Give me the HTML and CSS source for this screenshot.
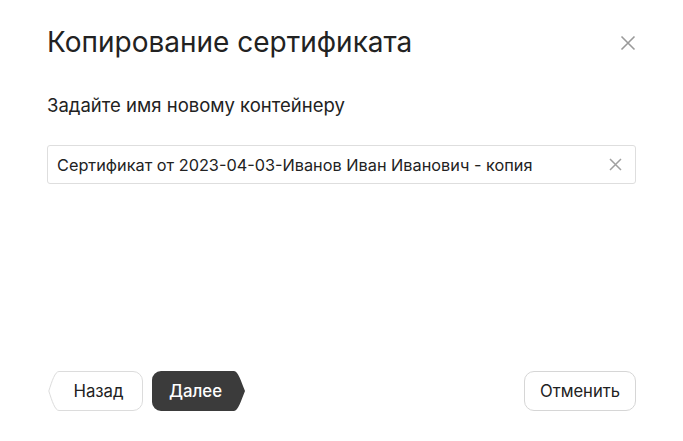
FILE: index.html
```html
<!DOCTYPE html>
<html lang="ru">
<head>
<meta charset="utf-8">
<link rel="stylesheet" href="styles.css">
</head>
<body>
<div class="dialog">
  <div class="header">
    <h1 class="title">Копирование сертификата</h1>
    <button class="close" aria-label="Закрыть">
      <svg width="16" height="16" viewBox="0 0 16 16"><path d="M1.5 1.5L14.5 14.5M14.5 1.5L1.5 14.5" stroke="#9a9a9a" stroke-width="1.6" fill="none"/></svg>
    </button>
  </div>
  <div class="label">Задайте имя новому контейнеру</div>
  <div class="field">
    <span class="field-text">Сертификат от 2023-04-03-Иванов Иван Иванович - копия</span>
    <svg class="clear" width="13" height="13" viewBox="0 0 13 13"><path d="M1 1L12 12M12 1L1 12" stroke="#a0a0a0" stroke-width="1.5" fill="none"/></svg>
  </div>
  <div class="footer">
    <div class="nav">
      <button class="btn-back">
        <svg class="shape" width="95" height="40" viewBox="0 0 95 40"><path d="M11 0.5H85a9.5 9.5 0 0 1 9.5 9.5V30a9.5 9.5 0 0 1-9.5 9.5H11C7 39.5 4 30 0.8 20C4 10 7 0.5 11 0.5Z" fill="#fff" stroke="#dcdcdc"/></svg>
        <span>Назад</span>
      </button>
      <button class="btn-next">
        <svg class="shape" width="93" height="40" viewBox="0 0 93 40"><path d="M9 0H82C86 0 89 10 93 20C89 30 86 40 82 40H9A9 9 0 0 1 0 31V9A9 9 0 0 1 9 0Z" fill="#3b3b3b"/></svg>
        <span>Далее</span>
      </button>
    </div>
    <button class="btn-cancel">Отменить</button>
  </div>
</div>
</body>
</html>
```
FILE: styles.css
```css
html, body {
  margin: 0;
  padding: 0;
  background: #fff;
}
body {
  font-family: Inter, "Noto Sans", sans-serif;
  color: #222;
}
.dialog {
  box-sizing: border-box;
  height: 441px;
  padding: 24px 47px 30px 47px;
  display: flex;
  flex-direction: column;
}
.header {
  display: flex;
  justify-content: space-between;
  align-items: flex-start;
}
.title {
  margin: 0;
  font-size: 28px;
  font-weight: 400;
  line-height: 36px;
  color: #222;
}
.close {
  border: 0;
  background: none;
  padding: 0;
  margin-top: 11px;
  width: 16px;
  height: 16px;
  display: flex;
}
.label {
  margin-top: 33px;
  font-size: 18.5px;
  line-height: 24px;
  color: #222;
}
.field {
  margin-top: 28px;
  height: 39px;
  box-sizing: border-box;
  border: 1px solid #dedede;
  border-radius: 3px;
  display: flex;
  align-items: center;
  justify-content: space-between;
  padding: 0 13px 0 9px;
}
.field-text {
  font-size: 16.3px;
  color: #222;
}
.footer {
  margin-top: auto;
  display: flex;
  justify-content: space-between;
  align-items: center;
}
.nav {
  display: flex;
  gap: 9px;
  margin-left: 1px;
}
.btn-back, .btn-next {
  position: relative;
  border: 0;
  background: none;
  padding: 0;
  height: 40px;
  font-family: inherit;
  font-size: 16.8px;
  display: flex;
  align-items: center;
  justify-content: center;
}
.btn-back { width: 95px; color: #222; padding-left: 6px; }
.btn-next { width: 93px; color: #fff; font-weight: 500; padding-right: 6px; }
.btn-back span, .btn-next span { position: relative; }
.shape {
  position: absolute;
  left: 0;
  top: 0;
}
.btn-cancel {
  height: 40px;
  width: 112px;
  box-sizing: border-box;
  border: 1px solid #d6d6d6;
  border-radius: 10px;
  background: #fff;
  font-family: inherit;
  font-size: 16.6px;
  color: #222;
  padding: 0;
}
```
